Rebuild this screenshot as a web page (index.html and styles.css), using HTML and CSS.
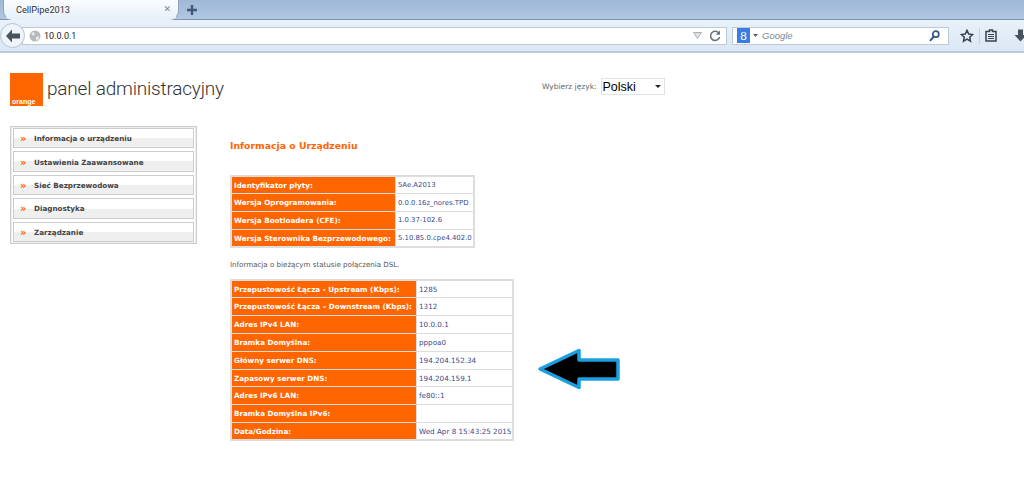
FILE: index.html
```html
<!DOCTYPE html>
<html lang="pl">
<head>
    <meta charset="UTF-8">
    <title>CellPipe2013</title>
    <link rel="stylesheet" href="styles.css">
</head>
<body>
    <div class="tabstrip">
        <div class="tab">
            <span class="tab-title">CellPipe2013</span>
            <span class="tab-close">&#x2715;</span>
        </div>
        <svg class="new-tab" width="12" height="12" viewBox="0 0 12 12"><path d="M6 1v10M1 6h10" stroke="#3f5a78" stroke-width="2.4" fill="none"/></svg>
    </div>

    <div class="navbar">
        <div class="back-btn">
            <svg width="16" height="14" viewBox="0 0 16 14"><path d="M7 0.5L1 7l6 6.5V9.5h8v-5H7z" fill="#47535f"/></svg>
        </div>
        <div class="urlbar">
            <svg class="globe" width="12" height="12" viewBox="0 0 12 12"><circle cx="6" cy="6" r="5.5" fill="#b5b9bd"/><path d="M2 3l3-1 1 2-2 2zM7 7l3-1 0 3-3 2z" fill="#e6e8ea"/></svg>
            <span class="url-text">10.0.0.1</span>
            <span class="url-icons">
                <svg width="9" height="7" viewBox="0 0 9 7"><path d="M0.5 0.5h8L4.5 6.5z" fill="#dfe3e6" stroke="#a9b0b6"/></svg>
                <svg width="12" height="12" viewBox="0 0 12 12"><path d="M10 3.4A4.6 4.6 0 1 0 10.6 7" fill="none" stroke="#66727e" stroke-width="1.6"/><path d="M11 0.5v4.2H6.8z" fill="#66727e"/></svg>
            </span>
        </div>
        <div class="searchbar">
            <span class="engine">8</span>
            <svg width="5" height="3" viewBox="0 0 5 3"><path d="M0 0h5L2.5 3z" fill="#56626e"/></svg>
            <span class="search-text">Google</span>
            <svg class="search-icon" width="11" height="12" viewBox="0 0 11 12"><circle cx="6.8" cy="4.2" r="3" fill="none" stroke="#33598a" stroke-width="1.7"/><path d="M4.8 6.5L1 10.8" stroke="#33598a" stroke-width="2"/></svg>
        </div>
        <div class="tools">
            <svg width="14" height="14" viewBox="0 0 14 14"><path d="M7 1.3l1.7 3.7 4 .5-3 2.7.8 4L7 10.2l-3.5 2 .8-4-3-2.7 4-.5z" fill="none" stroke="#39434d" stroke-width="1.5"/></svg>
            <span class="tool-sep"></span>
            <svg width="12" height="13" viewBox="0 0 12 13"><path d="M1 2.5h3.5V1h3v1.5H11V12H1z" fill="none" stroke="#39434d" stroke-width="1.5"/><path d="M3 5.5h6M3 7.5h6M3 9.5h6" stroke="#39434d" stroke-width="1.2"/></svg>
            <svg class="download" width="13" height="13" viewBox="0 0 13 13"><path d="M4 0.5h5V6h3.5L6.5 12.5 0.5 6H4z" fill="#47535f"/></svg>
        </div>
    </div>

    <div class="page">
        <header class="page-head">
            <div class="brand">
                <div class="logo"><span>orange</span></div>
                <span class="brand-name">panel administracyjny</span>
            </div>
            <div class="lang">
                <label for="lang-select">Wybierz język:</label>
                <div class="select-wrap">
                    <select id="lang-select">
                        <option>Polski</option>
                    </select>
                </div>
            </div>
        </header>

        <div class="main">
            <nav class="sidebar">
                <a class="menu-item"><i class="chevron">&raquo;</i>Informacja o urządzeniu</a>
                <a class="menu-item"><i class="chevron">&raquo;</i>Ustawienia Zaawansowane</a>
                <a class="menu-item"><i class="chevron">&raquo;</i>Sieć Bezprzewodowa</a>
                <a class="menu-item"><i class="chevron">&raquo;</i>Diagnostyka</a>
                <a class="menu-item"><i class="chevron">&raquo;</i>Zarządzanie</a>
            </nav>

            <section class="content">
                <h1>Informacja o Urządzeniu</h1>

                <table class="info-table first">
                    <tr><th>Identyfikator płyty:</th><td>5Ae.A2013</td></tr>
                    <tr><th>Wersja Oprogramowania:</th><td>0.0.0.16z_nores.TPD</td></tr>
                    <tr><th>Wersja Bootloadera (CFE):</th><td>1.0.37-102.6</td></tr>
                    <tr><th>Wersja Sterownika Bezprzewodowego:</th><td>5.10.85.0.cpe4.402.0</td></tr>
                </table>

                <p class="status-note">Informacja o bieżącym statusie połączenia DSL.</p>

                <table class="info-table second">
                    <tr><th>Przepustowość Łącza - Upstream (Kbps):</th><td>1285</td></tr>
                    <tr><th>Przepustowość Łącza – Downstream (Kbps):</th><td>1312</td></tr>
                    <tr><th>Adres IPv4 LAN:</th><td>10.0.0.1</td></tr>
                    <tr><th>Bramka Domyślna:</th><td>pppoa0</td></tr>
                    <tr><th>Główny serwer DNS:</th><td>194.204.152.34</td></tr>
                    <tr><th>Zapasowy serwer DNS:</th><td>194.204.159.1</td></tr>
                    <tr><th>Adres IPv6 LAN:</th><td>fe80::1</td></tr>
                    <tr><th>Bramka Domyślna IPv6:</th><td></td></tr>
                    <tr><th>Data/Godzina:</th><td>Wed Apr 8 15:43:25 2015</td></tr>
                </table>
            </section>
        </div>

        <svg class="arrow" width="84" height="46" viewBox="0 0 84 46"><path d="M3 22L42 3.500V13H81V32H42V40.500z" fill="#000" stroke="#1a9fe0" stroke-width="3.500" stroke-linejoin="round"/></svg>
    </div>
</body>
</html>
```

FILE: styles.css
```css
html, body {
    margin: 0;
    padding: 0;
    height: 486px;
    overflow: hidden;
    background: white;
}

body {
    font-family: 'DejaVu Sans', Verdana, sans-serif;
}

/* browser chrome */
.tabstrip {
    height: 19px;
    display: flex;
    align-items: flex-end;
    background: linear-gradient(#9fb8d6, #b0c7e1);
    border-bottom: 1px solid #7f95ad;
}

.tab {
    width: 155px;
    height: 20px;
    margin: 0 0 -1px 3px;
    padding: 0 7px 0 12px;
    display: flex;
    align-items: center;
    justify-content: space-between;
    background: linear-gradient(#fbfdff, #e6f0fa);
    border-right: 1px solid #8ea3ba;
    border-bottom-right-radius: 9px;
    border-left: 1px solid #8ea3ba;
    border-bottom-left-radius: 9px;
    border-bottom: 1px solid #e6f0fa;
}

.tab-title {
    font-family: Roboto, Arial, sans-serif;
    font-size: 9.200px;
    color: #333;
}

.tab-close {
    font-size: 9px;
    font-weight: bold;
    color: #7d858d;
}

.new-tab {
    margin: 0 0 3px 7px;
}

.navbar {
    height: 31px;
    display: flex;
    align-items: center;
    background: linear-gradient(#e9f1fa, #dbe7f4);
    border-bottom: 2px solid #bccbdc;
}

.back-btn {
    width: 23px;
    height: 23px;
    display: flex;
    align-items: center;
    justify-content: center;
    background: #eef4fa;
    border: 1px solid #b4c3d3;
    border-radius: 50%;
    flex: none;
    z-index: 1;
}

.urlbar {
    width: 705px;
    height: 18px;
    margin-left: -3px;
    padding: 0 5px;
    box-sizing: border-box;
    display: flex;
    align-items: center;
    background: white;
    border: 1px solid #bccad8;
    flex: none;
}

.globe {
    margin-left: 1px;
}

.url-text {
    margin-left: 3px;
    font-family: Roboto, Arial, sans-serif;
    font-size: 9px;
    color: #222;
}

.url-icons {
    margin-left: auto;
    display: flex;
    align-items: center;
    gap: 7px;
}

.searchbar {
    width: 217px;
    height: 18px;
    margin-left: 5px;
    padding: 0 4px;
    box-sizing: border-box;
    display: flex;
    align-items: center;
    background: white;
    border: 1px solid #bccad8;
    flex: none;
}

.engine {
    width: 13px;
    height: 15px;
    margin-right: 3px;
    background: #3d7be0;
    color: white;
    font-family: 'Liberation Serif', serif;
    font-size: 13px;
    line-height: 15px;
    text-align: center;
}

.search-text {
    margin-left: 4px;
    font-family: 'Liberation Sans', Arial, sans-serif;
    font-style: italic;
    font-size: 9.500px;
    color: #808890;
}

.search-icon {
    margin-left: auto;
    margin-right: 4px;
}

.tools {
    margin-left: 11px;
    display: flex;
    align-items: center;
    gap: 5px;
}

.tool-sep {
    width: 1px;
    height: 16px;
    background: #c3d0de;
}

.download {
    margin-left: 12px;
}

/* page */
.page {
    position: relative;
    height: 433px;
}

.page-head {
    height: 73px;
    padding: 20px 0 0 10px;
    box-sizing: border-box;
    display: flex;
    align-items: flex-start;
}

.brand {
    width: 518px;
    display: flex;
    align-items: center;
}

.logo {
    width: 33px;
    height: 33px;
    background: #ff6600;
    display: flex;
    align-items: flex-end;
    flex: none;
}

.logo span {
    padding: 0 0 1px 2px;
    font-family: 'Liberation Sans', Arial, sans-serif;
    font-size: 7px;
    font-weight: bold;
    color: white;
}

.brand-name {
    margin: -2px 0 0 4px;
    font-family: Roboto, Arial, sans-serif;
    font-weight: 300;
    font-size: 19px;
    letter-spacing: -0.2px;
    color: #333;
    white-space: nowrap;
}

.lang {
    margin: 5px 0 0 14px;
    display: flex;
    align-items: center;
    gap: 4px;
}

.lang label {
    font-size: 7.500px;
    color: #666;
}

.select-wrap {
    position: relative;
}

.select-wrap::after {
    content: "";
    position: absolute;
    right: 4px;
    top: 7px;
    border-style: solid;
    border-width: 3px 3.500px 0;
    border-color: #222 transparent transparent;
}

.lang select {
    display: block;
    width: 64px;
    height: 17px;
    padding: 0 0 0 1px;
    appearance: none;
    font-family: 'Liberation Sans', Arial, sans-serif;
    font-size: 12.500px;
    color: black;
    background: white;
    border: 1px solid #e2e2e2;
    border-radius: 0;
}

.main {
    display: flex;
    align-items: flex-start;
    padding-left: 10px;
}

.sidebar {
    width: 187px;
    height: 118px;
    padding: 1px 2px;
    box-sizing: border-box;
    display: flex;
    flex-direction: column;
    gap: 3px;
    border: 1px solid #ccc;
    outline: 1px solid #eee;
    outline-offset: -2px;
    flex: none;
}

.menu-item {
    height: 20.500px;
    box-sizing: border-box;
    padding: 1px 0 0 6px;
    display: flex;
    align-items: center;
    font-size: 7.200px;
    font-weight: bold;
    color: #444;
    border: 1px solid #ccc;
    background: linear-gradient(white 50%, #efefef 50%);
}

.chevron {
    width: 14px;
    font-size: 10px;
    font-style: normal;
    color: #ff6600;
}

.content {
    margin-left: 33px;
}

h1 {
    margin: 13px 0 22px;
    font-size: 9.300px;
    line-height: 14px;
    font-weight: bold;
    color: #ff6600;
}

.info-table {
    border-collapse: collapse;
    border: 2px solid #ddd;
}

.info-table th,
.info-table td {
    height: 17.800px;
    box-sizing: border-box;
    border: 1px solid #ddd;
    font-size: 7.200px;
    white-space: nowrap;
    text-align: left;
}

.info-table th {
    padding: 0 4px 0 2px;
    background: #ff6600;
    color: #fff;
}

.info-table td {
    padding: 0 1px 0 2px;
    color: #3a4a8c;
}

.first td {
    width: 76px;
    font-size: 6.900px;
}

.second td {
    width: 95px;
}

.status-note {
    margin: 11px 0 9px;
    font-size: 7.100px;
    line-height: 11px;
    color: #555;
}

.arrow {
    position: absolute;
    left: 537px;
    top: 294px;
}
```
